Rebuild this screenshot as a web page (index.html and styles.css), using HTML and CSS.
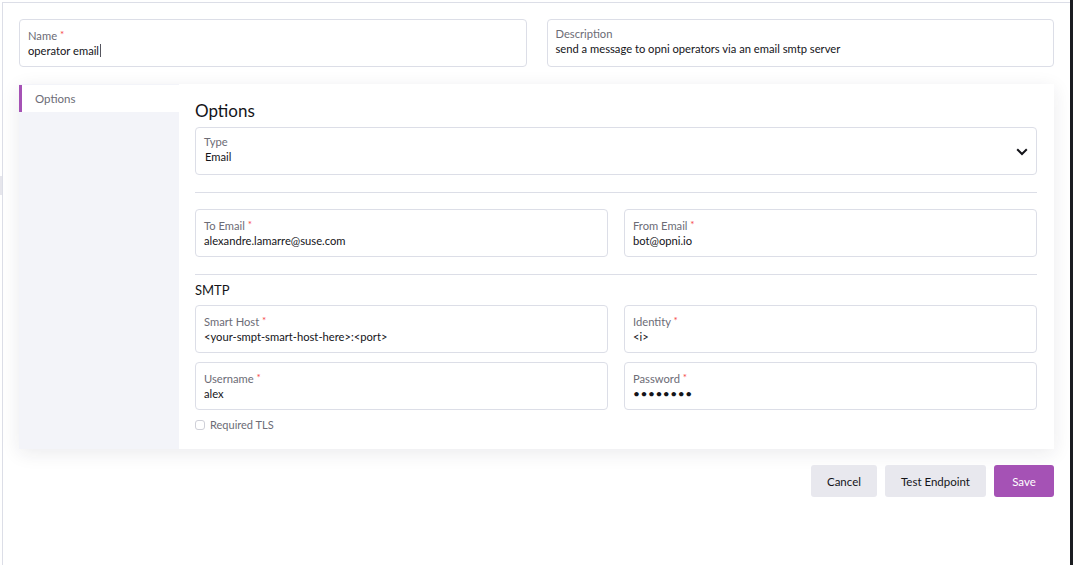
FILE: index.html
```html
<!DOCTYPE html>
<html>
<head>
<meta charset="utf-8">
<link rel="stylesheet" href="styles.css">
</head>
<body>
<div class="gutter"><div class="gutter-mark"></div></div>
<main class="main">
  <div class="row2 top-row">
    <div class="field">
      <div class="label">Name <span class="req">*</span></div>
      <div class="value">operator email<span class="caret"></span></div>
    </div>
    <div class="field">
      <div class="label">Description</div>
      <div class="value">send a message to opni operators via an email smtp server</div>
    </div>
  </div>

  <section class="card">
    <nav class="tabs">
      <div class="tab active">Options</div>
    </nav>
    <div class="panel">
      <h2 class="title">Options</h2>
      <div class="field select">
        <div>
          <div class="label">Type</div>
          <div class="value">Email</div>
        </div>
        <svg class="chev" width="12" height="8" viewBox="0 0 12 8"><path d="M1.2 1.3 L6 6 L10.8 1.3" fill="none" stroke="#141419" stroke-width="2"/></svg>
      </div>
      <hr class="sep">
      <div class="row2">
        <div class="field">
          <div class="label">To Email <span class="req">*</span></div>
          <div class="value">alexandre.lamarre@suse.com</div>
        </div>
        <div class="field">
          <div class="label">From Email <span class="req">*</span></div>
          <div class="value">bot@opni.io</div>
        </div>
      </div>
      <hr class="sep tight">
      <h3 class="subtitle">SMTP</h3>
      <div class="row2">
        <div class="field">
          <div class="label">Smart Host <span class="req">*</span></div>
          <div class="value">&lt;your-smpt-smart-host-here&gt;:&lt;port&gt;</div>
        </div>
        <div class="field">
          <div class="label">Identity <span class="req">*</span></div>
          <div class="value">&lt;i&gt;</div>
        </div>
      </div>
      <div class="row2 gap-row">
        <div class="field">
          <div class="label">Username <span class="req">*</span></div>
          <div class="value">alex</div>
        </div>
        <div class="field">
          <div class="label">Password <span class="req">*</span></div>
          <div class="value dots">••••••••</div>
        </div>
      </div>
      <label class="check"><span class="box"></span>Required TLS</label>
    </div>
  </section>

  <div class="actions">
    <button class="btn">Cancel</button>
    <button class="btn">Test Endpoint</button>
    <button class="btn primary">Save</button>
  </div>
</main>
<div class="rail"></div>
</body>
</html>
```

FILE: styles.css
```css
* { box-sizing: border-box; }
html, body { margin: 0; padding: 0; }
body {
  display: flex;
  width: 1073px;
  height: 565px;
  overflow: hidden;
  background: #ffffff;
  font-family: Lato, "Noto Sans", sans-serif;
  color: #141419;
}
.gutter { width: 2px; flex: none; }
.gutter-mark { margin-top: 176px; height: 19px; background: #e6e6ec; }
.main {
  flex: 1;
  margin-top: 2px;
  border-left: 1px solid #dcdee7;
  border-top: 1px solid #dcdee7;
  padding: 16px;
}
.rail { width: 3px; flex: none; background: #1b1d21; }

.row2 { display: grid; grid-template-columns: 1fr 1fr; gap: 16px; }
.top-row { gap: 20px; }
.gap-row { margin-top: 9px; }

.field {
  height: 48px;
  border: 1px solid #dcdee7;
  border-radius: 4px;
  padding: 7px 8px 0 8px;
  background: #fff;
}
.label { font-size: 11.2px; line-height: 14px; color: #6c6c76; }
.req { color: #f64747; font-size: 10px; vertical-align: 2px; }
.value { font-size: 11.2px; line-height: 16px; margin-top: 0; color: #141419; white-space: nowrap; }
.caret { display: inline-block; width: 1px; height: 13px; background: #55555e; vertical-align: -2px; margin-left: 1px; }
.dots { letter-spacing: 0.5px; font-size: 12px; }

.select { display: flex; justify-content: space-between; align-items: center; padding-top: 0; padding-right: 8px; }
.select > div { align-self: flex-start; padding-top: 7px; }
.select .value { margin-left: 1px; }
.chev { margin-top: 2px; }

.card {
  display: flex;
  margin-top: 17px;
  background: #fff;
  box-shadow: 0 4px 18px rgba(30, 30, 60, 0.09);
}
.tabs { width: 160px; flex: none; background: #f3f4f9; padding-top: 1px; }
.tab {
  height: 27px;
  line-height: 27px;
  padding-left: 13px;
  border-left: 3px solid #a552b5;
  background: #fff;
  font-size: 11.5px;
  color: #6c6c76;
}
.panel { flex: 1; padding: 16px 17px 17px 16px; }
.title { margin: 0 0 5px 0; font-size: 17px; line-height: 22px; font-weight: 400; color: #141419; }
.subtitle { margin: 0 0 7px 0; font-size: 13px; line-height: 16px; font-weight: 400; color: #141419; }
.sep { border: 0; border-top: 1px solid #dcdee7; margin: 17px 0 16px 0; }
.sep.tight { margin: 17px 0 7px 0; }

.check { display: flex; align-items: center; margin-top: 8px; font-size: 11px; color: #6c6c76; line-height: 14px; }
.box { width: 10px; height: 10px; border: 1px solid #cfd0d8; border-radius: 3px; margin-right: 5px; }

.actions { display: flex; justify-content: flex-end; gap: 8px; margin-top: 16px; }
.btn {
  height: 32px;
  padding: 0 16px;
  border: 0;
  border-radius: 3px;
  background: #e8e8ee;
  color: #141419;
  font-family: Lato, "Noto Sans", sans-serif;
  font-size: 11.5px;
}
.btn.primary { background: #a552b5; color: #fff; padding: 0 16px; min-width: 60px; }
```
